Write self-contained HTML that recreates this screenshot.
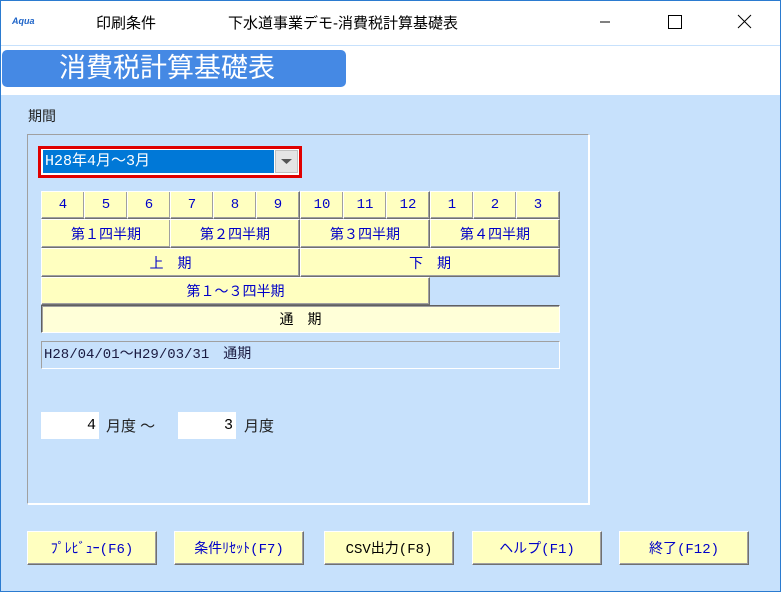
<!DOCTYPE html>
<html><head><meta charset="utf-8"><style>
*{box-sizing:border-box;margin:0;padding:0}
body{width:781px;height:592px;position:relative;overflow:hidden;font-family:"Liberation Sans","Noto Sans CJK JP",sans-serif;background:#fff}
.a{position:absolute}
.m{font-family:"Liberation Mono","Noto Sans CJK JP",monospace}
.frame{left:0;top:0;width:781px;height:592px;border:1px solid #2b7bd0}
.btn{position:absolute;background:#ffffc0;border:1px solid;border-color:#fff #707070 #707070 #fff;box-shadow:inset -1px -1px 0 #a0a0a0;color:#0000c8;font-size:14px;display:flex;align-items:center;justify-content:center;white-space:pre;font-family:"Liberation Mono","Noto Sans CJK JP",monospace}
.fb{position:absolute;top:531px;height:34px;width:130px;background:#ffffc0;border:1px solid;border-color:#fff #707070 #707070 #fff;box-shadow:inset -1px -1px 0 #a0a0a0;color:#0000c8;font-size:14px;display:flex;align-items:center;justify-content:center;font-family:"Liberation Mono","Noto Sans CJK JP",monospace}
</style></head><body>
<div class="a" style="left:1px;top:95px;width:779px;height:496px;background:#c7e1fc"></div>
<div class="a" style="left:1px;top:45px;width:779px;height:1px;background:#c7e1fc"></div>
<div class="a" style="left:12px;top:16px;font-size:9px;font-style:italic;font-weight:bold;color:#1e64c8">Aqua</div>
<div class="a" style="left:96px;top:12px;font-size:15px;color:#000">印刷条件</div>
<div class="a" style="left:228px;top:12px;font-size:15px;color:#000">下水道事業デモ-消費税計算基礎表</div>
<svg class="a" style="left:600px;top:10px" width="170" height="24"><line x1="0" y1="12" x2="10" y2="12" stroke="#000"/><rect x="68.5" y="5.5" width="13" height="13" fill="none" stroke="#000"/><path d="M138 5 L151 18 M151 5 L138 18" stroke="#000"/></svg>
<div class="a" style="left:2px;top:50px;width:344px;height:37px;background:#4589e4;border-radius:5px;color:#fff;font-size:27px;line-height:37px;padding-left:57px">消費税計算基礎表</div>
<div class="a" style="left:28px;top:106px;font-size:14px;color:#222">期間</div>
<div class="a" style="left:27px;top:134px;width:562px;height:370px;border:1px solid;border-color:#a0a0a0 #fff #fff #a0a0a0;box-shadow:1px 1px 0 #fff"></div>
<div class="a" style="left:38px;top:146px;width:264px;height:32px;border:3px solid #e00000;background:#fff"></div>
<div class="a m" style="left:43px;top:150px;width:231px;height:23px;background:#0078d7;color:#fff;font-size:15px;line-height:23px;padding-left:2px">H28年4月～3月</div>
<div class="a" style="left:275px;top:150px;width:23px;height:23px;background:#e4e4e4;border:1px solid #c0c0c0"><svg width="21" height="21"><path d="M5 8 L16 8 L10.5 13Z" fill="#555"/></svg></div>
<div class="btn" style="left:41px;top:191px;width:44px;height:28px">4</div>
<div class="btn" style="left:84px;top:191px;width:44px;height:28px">5</div>
<div class="btn" style="left:127px;top:191px;width:44px;height:28px">6</div>
<div class="btn" style="left:170px;top:191px;width:44px;height:28px">7</div>
<div class="btn" style="left:213px;top:191px;width:44px;height:28px">8</div>
<div class="btn" style="left:256px;top:191px;width:44px;height:28px">9</div>
<div class="btn" style="left:300px;top:191px;width:44px;height:28px">10</div>
<div class="btn" style="left:343px;top:191px;width:44px;height:28px">11</div>
<div class="btn" style="left:386px;top:191px;width:44px;height:28px">12</div>
<div class="btn" style="left:430px;top:191px;width:44px;height:28px">1</div>
<div class="btn" style="left:473px;top:191px;width:44px;height:28px">2</div>
<div class="btn" style="left:516px;top:191px;width:44px;height:28px">3</div>
<div class="btn" style="left:41px;top:219px;width:130px;height:29px">第１四半期</div>
<div class="btn" style="left:170px;top:219px;width:130px;height:29px">第２四半期</div>
<div class="btn" style="left:300px;top:219px;width:130px;height:29px">第３四半期</div>
<div class="btn" style="left:430px;top:219px;width:130px;height:29px">第４四半期</div>
<div class="btn" style="left:41px;top:248px;width:259px;height:29px">上　期</div>
<div class="btn" style="left:300px;top:248px;width:260px;height:29px">下　期</div>
<div class="btn" style="left:41px;top:277px;width:389px;height:28px">第１～３四半期</div>
<div class="btn" style="left:41px;top:305px;width:519px;height:28px;background:#ffffd8;color:#000;border-color:#606060 #fff #fff #606060;box-shadow:inset 1px 1px 0 #a0a0a0">通　期</div>
<div class="a m" style="left:41px;top:341px;width:519px;height:28px;border:1px solid;border-color:#a0a0a0 #fff #fff #a0a0a0;font-size:14px;line-height:26px;padding-left:2px;color:#1a1a40">H28/04/01～H29/03/31　通期</div>
<div class="a m" style="left:41px;top:412px;width:58px;height:27px;background:#fff;font-size:15px;line-height:27px;text-align:right;padding-right:3px">4</div>
<div class="a" style="left:106px;top:415px;font-size:15px;color:#222">月度 ～</div>
<div class="a m" style="left:178px;top:412px;width:58px;height:27px;background:#fff;font-size:15px;line-height:27px;text-align:right;padding-right:3px">3</div>
<div class="a" style="left:244px;top:415px;font-size:15px;color:#222">月度</div>
<div class="fb" style="left:27px">ﾌﾟﾚﾋﾞｭｰ(F6)</div>
<div class="fb" style="left:174px">条件ﾘｾｯﾄ(F7)</div>
<div class="fb" style="left:324px;color:#000">CSV出力(F8)</div>
<div class="fb" style="left:472px">ヘルプ(F1)</div>
<div class="fb" style="left:619px">終了(F12)</div>
<div class="a frame"></div>
</body></html>
